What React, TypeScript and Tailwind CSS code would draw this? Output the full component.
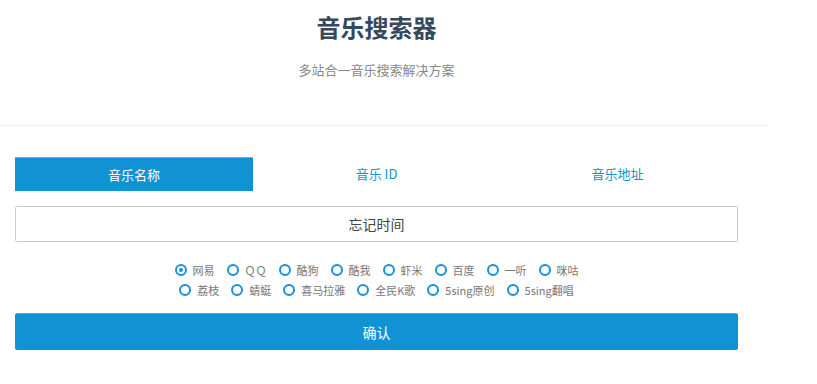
import React, { useState } from "react"

const tabs = ["音乐名称", "音乐 ID", "音乐地址"]

const rowOne = ["网易", "ＱＱ", "酷狗", "酷我", "虾米", "百度", "一听", "咪咕"]
const rowTwo = ["荔枝", "蜻蜓", "喜马拉雅", "全民K歌", "5sing原创", "5sing翻唱"]

function Radio({ label, checked, onPick }: { label: string; checked: boolean; onPick: () => void }) {
  return (
    <label className="flex items-center mr-[12px] cursor-pointer" onClick={onPick}>
      <span className="flex items-center justify-center w-[12px] h-[12px] rounded-full border-2 border-[#1a8fd8] bg-white">
        {checked && <span className="w-[4px] h-[4px] rounded-full bg-[#1a8fd8]" />}
      </span>
      <span className="ml-[6px] text-[11px] leading-[20px] text-[#777]">{label}</span>
    </label>
  )
}

export default function App() {
  const [tab, setTab] = useState(0)
  const [site, setSite] = useState("网易")
  const [query, setQuery] = useState("忘记时间")

  return (
    <div
      className="w-[817px] h-[384px] bg-white"
      style={{ fontFamily: '"Noto Sans CJK SC", "Liberation Sans", sans-serif' }}
    >
      <div className="w-[768px] border-b border-[#eee]">
        <div className="ml-[15px] w-[723px] pt-[10px] h-[125px] flex flex-col items-center">
          <h1 className="text-[24px] leading-[34px] font-bold text-[#34495e]">音乐搜索器</h1>
          <p className="mt-[17px] text-[13px] leading-[18px] text-[#888]">多站合一音乐搜索解决方案</p>
        </div>
      </div>

      <div className="ml-[15px] w-[723px] pt-[31px]">
        <div className="flex">
          {tabs.map((t, i) => (
            <button
              key={t}
              onClick={() => setTab(i)}
              className={
                i === tab
                  ? "w-[238px] mr-[3px] h-[34px] text-[13px] text-white bg-[#1192d4] border-t border-[#5ab3e3]"
                  : "w-[241px] h-[34px] text-[13px] text-[#1192d4] bg-white"
              }
            >
              {t}
            </button>
          ))}
        </div>

        <input
          value={query}
          onChange={(e) => setQuery(e.target.value)}
          className="mt-[15px] w-full h-[36px] border border-[#ccc] rounded-[2px] text-center text-[14px] text-[#444] outline-none"
        />

        <div className="mt-[18px] flex flex-col items-center">
          <div className="flex pl-[12px]">
            {rowOne.map((s) => (
              <Radio key={s} label={s} checked={site === s} onPick={() => setSite(s)} />
            ))}
          </div>
          <div className="flex pl-[12px]">
            {rowTwo.map((s) => (
              <Radio key={s} label={s} checked={site === s} onPick={() => setSite(s)} />
            ))}
          </div>
        </div>

        <button className="mt-[13px] w-full h-[37px] rounded-[2px] bg-[#1192d4] border-t border-[#4aaee3] text-white text-[14px]">
          确认
        </button>
      </div>
    </div>
  )
}
